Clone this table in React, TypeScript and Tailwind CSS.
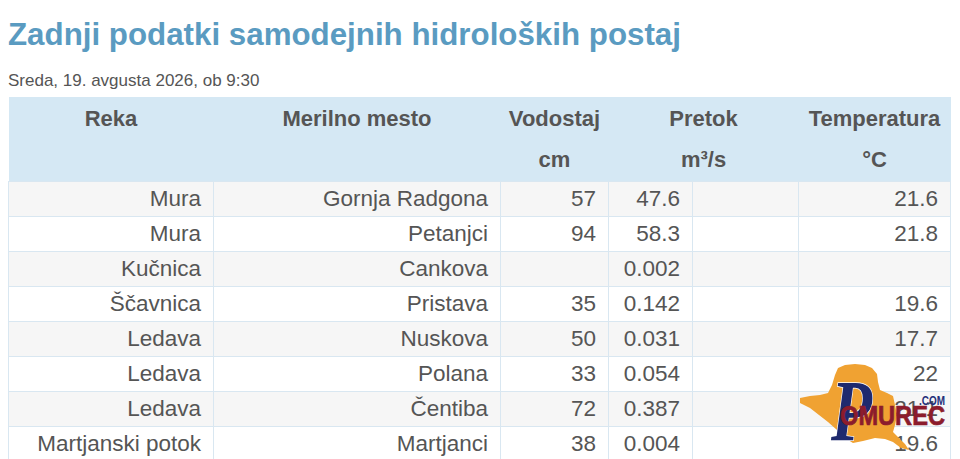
import React from "react";

const rows: [string, string, string, string, string][] = [
  ["Mura", "Gornja Radgona", "57", "47.6", "21.6"],
  ["Mura", "Petanjci", "94", "58.3", "21.8"],
  ["Kučnica", "Cankova", "", "0.002", ""],
  ["Ščavnica", "Pristava", "35", "0.142", "19.6"],
  ["Ledava", "Nuskova", "50", "0.031", "17.7"],
  ["Ledava", "Polana", "33", "0.054", "22"],
  ["Ledava", "Čentiba", "72", "0.387", "21.1"],
  ["Martjanski potok", "Martjanci", "38", "0.004", "19.6"],
];

function Logo() {
  return (
    <svg
      className="absolute left-[795px] top-[360px]"
      width="160"
      height="95"
      viewBox="0 0 160 95"
    >
      <polygon
        fill="#f0a232"
        points="5,38 15,36 25,35 33,33 37,25 40,15 43,8 50,5 60,4 70,5 77,8 82,14 83,22 85,30 92,33 98,36 100,45 102,55 100,65 98,72 104,78 110,84 114,90 106,88 98,82 90,79 80,78 68,81 58,83 50,78 42,70 33,62 24,55 15,48 5,43"
      />
      <text
        transform="translate(36,80) scale(0.78,1)"
        x="0"
        y="0"
        fontFamily="'Liberation Serif', 'Times New Roman', serif"
        fontStyle="italic"
        fontWeight="700"
        fontSize="86"
        fill="#1f2a6e"
        stroke="#ffffff"
        strokeWidth="1.5"
        paintOrder="stroke"
      >
        P
      </text>
      <text
        x="45"
        y="65"
        fontFamily="'Liberation Sans', Arial, sans-serif"
        fontWeight="700"
        fontSize="27"
        fill="#8c1c2c"
        stroke="#8c1c2c"
        strokeWidth="0.7"
        textLength="105"
        lengthAdjust="spacingAndGlyphs"
      >
        OMUREC
      </text>
      <text
        x="124"
        y="45"
        fontFamily="'Liberation Sans', Arial, sans-serif"
        fontWeight="700"
        fontSize="12"
        fill="#1f2f7a"
        textLength="26"
        lengthAdjust="spacingAndGlyphs"
      >
        .COM
      </text>
    </svg>
  );
}

export default function App() {
  return (
    <div
      className="relative w-[960px] h-[459px] overflow-hidden bg-white text-[#555]"
      style={{ fontFamily: "'Liberation Sans', Arial, Helvetica, sans-serif" }}
    >
      <div className="pl-[8px] pt-[16px]">
        <h1 className="text-[31.3px] leading-[38px] font-bold text-[#5a9bc1]">
          Zadnji podatki samodejnih hidroloških postaj
        </h1>
        <div className="mt-[17px] text-[17px] leading-[20px] text-[#555]">
          Sreda, 19. avgusta 2026, ob 9:30
        </div>
        <table className="mt-[6px] border-collapse table-fixed w-[942px]">
          <colgroup>
            <col className="w-[205px]" />
            <col className="w-[287px]" />
            <col className="w-[108px]" />
            <col className="w-[84px]" />
            <col className="w-[106px]" />
            <col className="w-[152px]" />
          </colgroup>
          <thead className="bg-[#d5e8f4] text-[22px] font-bold text-[#555]">
            <tr className="h-[42px]">
              <th className="text-center align-middle">Reka</th>
              <th className="text-center align-middle">Merilno mesto</th>
              <th className="text-center align-middle">Vodostaj</th>
              <th colSpan={2} className="text-center align-middle">Pretok</th>
              <th className="text-center align-middle">Temperatura</th>
            </tr>
            <tr className="h-[42px]">
              <th></th>
              <th></th>
              <th className="text-center align-middle">cm</th>
              <th colSpan={2} className="text-center align-middle">m³/s</th>
              <th className="text-center align-middle">°C</th>
            </tr>
          </thead>
          <tbody className="text-[22.5px] text-[#555]">
            {rows.map((r, i) => (
              <tr
                key={i}
                className={i % 2 === 0 ? "h-[35px] bg-[#f6f6f6]" : "h-[35px] bg-white"}
              >
                <td className="border border-[#d9e7f1] px-[12px] text-right leading-[24px]">{r[0]}</td>
                <td className="border border-[#d9e7f1] px-[12px] text-right leading-[24px]">{r[1]}</td>
                <td className="border border-[#d9e7f1] px-[12px] text-right leading-[24px]">{r[2]}</td>
                <td className="border border-[#d9e7f1] px-[12px] text-right leading-[24px]">{r[3]}</td>
                <td className="border border-[#d9e7f1] px-[12px] text-right leading-[24px]"></td>
                <td className="border border-[#d9e7f1] px-[12px] text-right leading-[24px]">{r[4]}</td>
              </tr>
            ))}
          </tbody>
        </table>
      </div>
      <Logo />
    </div>
  );
}
